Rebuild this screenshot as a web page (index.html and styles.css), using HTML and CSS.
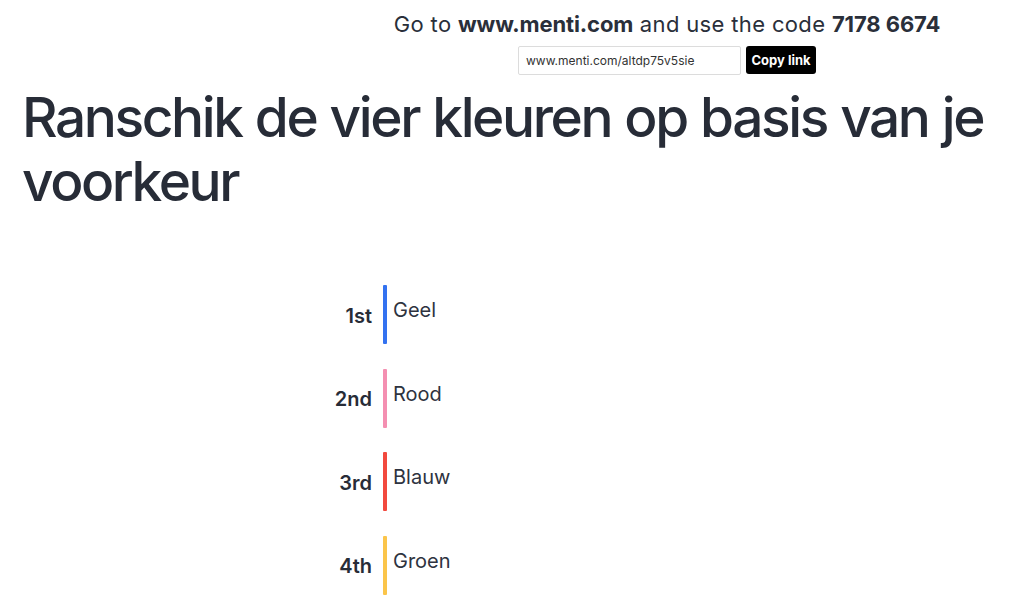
FILE: index.html
```html
<!DOCTYPE html>
<html lang="nl">
<head>
<meta charset="utf-8">
<title>Mentimeter</title>
<link rel="stylesheet" href="styles.css">
</head>
<body>
<header class="join">
  <p class="join-text">Go to <strong>www.menti.com</strong> and use the code <strong>7178 6674</strong></p>
  <div class="share">
    <div class="share-url">www.menti.com/altdp75v5sie</div>
    <button class="copy-btn">Copy link</button>
  </div>
</header>
<main class="slide">
  <h1 class="question">Ranschik de vier kleuren op basis van je voorkeur</h1>
  <ol class="ranking">
    <li class="rank-row"><span class="rank-label">1st</span><span class="rank-bar bar-blue"></span><span class="rank-item">Geel</span></li>
    <li class="rank-row"><span class="rank-label">2nd</span><span class="rank-bar bar-pink"></span><span class="rank-item">Rood</span></li>
    <li class="rank-row"><span class="rank-label">3rd</span><span class="rank-bar bar-red"></span><span class="rank-item">Blauw</span></li>
    <li class="rank-row"><span class="rank-label">4th</span><span class="rank-bar bar-yellow"></span><span class="rank-item">Groen</span></li>
  </ol>
</main>
</body>
</html>
```
FILE: styles.css
```css
* { box-sizing: border-box; }
html, body { margin: 0; padding: 0; background: #fff; }
body {
  font-family: Inter, "Noto Sans", sans-serif;
  color: #272c37;
  width: 1024px;
  height: 602px;
  overflow: hidden;
}
.join {
  display: flex;
  flex-direction: column;
  align-items: center;
  padding-left: 310px;
  padding-top: 10px;
}
.join-text {
  margin: 0;
  font-size: 22px;
  line-height: 28px;
  letter-spacing: 0.35px;
  color: #2a2f3a;
}
.join-text strong { font-weight: 700; letter-spacing: -0.1px; }
.share {
  display: flex;
  gap: 5px;
  margin-top: 8px;
}
.share-url {
  width: 223px;
  height: 29px;
  border: 1px solid #dcdcdc;
  border-radius: 2px;
  font-size: 12px;
  line-height: 27px;
  padding-left: 7px;
  color: #333;
}
.copy-btn {
  width: 70px;
  height: 28px;
  background: #000;
  color: #fff;
  border: none;
  border-radius: 3px;
  font-family: inherit;
  font-weight: 700;
  font-size: 13px;
  padding: 0;
}
.slide { padding: 0 22px; }
.question {
  margin: 10px 0 0;
  font-size: 55px;
  line-height: 64px;
  font-weight: 500;
  letter-spacing: -2.4px;
  word-spacing: 1px;
}
.ranking {
  list-style: none;
  margin: 72px 0 0;
  padding: 0 0 0 278px;
  display: flex;
  flex-direction: column;
  gap: 24.5px;
}
.rank-row {
  display: flex;
  height: 59px;
}
.rank-label {
  width: 72px;
  text-align: right;
  align-self: center;
  font-size: 20px;
  font-weight: 600;
  margin-right: 11px;
  padding-top: 2px;
}
.rank-bar { width: 4px; height: 59px; border-radius: 1px; }
.bar-blue { background: #3372f0; }
.bar-pink { background: #f48fb1; }
.bar-red { background: #f2493e; }
.bar-yellow { background: #fbc54a; }
.rank-item {
  margin-left: 6px;
  font-size: 20px;
  line-height: 24px;
  padding-top: 13px;
  color: #2e3340;
}
```
